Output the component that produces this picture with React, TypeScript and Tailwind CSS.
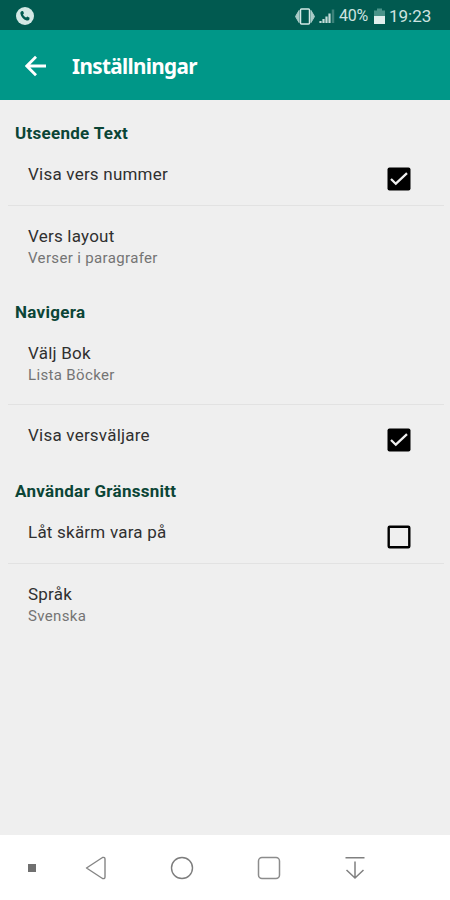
interface iSetting {
  title: string;
  summary?: string;
  checked?: boolean;
}

interface iGroup {
  name: string;
  settings: iSetting[];
}

const groups: iGroup[] = [
  {
    name: "Utseende Text",
    settings: [
      { title: "Visa vers nummer", checked: true },
      { title: "Vers layout", summary: "Verser i paragrafer" },
    ],
  },
  {
    name: "Navigera",
    settings: [
      { title: "Välj Bok", summary: "Lista Böcker" },
      { title: "Visa versväljare", checked: true },
    ],
  },
  {
    name: "Användar Gränssnitt",
    settings: [
      { title: "Låt skärm vara på", checked: false },
      { title: "Språk", summary: "Svenska" },
    ],
  },
];

const StatusBar = () => {
  return (
    <div className="flex h-[30px] items-center bg-[#015a50] pl-4 pr-[18px] pt-[2px] text-[#cfe3e0]">
      <svg width="18" height="18" viewBox="0 0 18 18">
        <circle cx="9" cy="9" r="9" fill="#d3e8e5" />
        <path
          d="M5.4 4.2 7 3.9l1 2.4-1 1.1c.7 1.4 1.7 2.5 3.1 3.2l1.2-1 2.3 1.1-.3 1.7c-.4 1-1.5 1.3-2.7 1C7.3 12.6 4.9 9.7 4.4 6.5c-.1-1 .2-1.8 1-2.3Z"
          fill="#015a50"
        />
      </svg>
      <svg className="ml-auto" width="20" height="17" viewBox="0 0 20 17">
        <path d="M4 2.5v12L.5 8.5ZM16 2.5v12l3.5-6Z" fill="#a9cbc7" stroke="#a9cbc7" strokeLinejoin="round" />
        <rect x="5.5" y="1" width="9" height="15" rx="1" fill="#015a50" stroke="#d3e8e5" strokeWidth="1.5" />
      </svg>
      <svg className="ml-1" width="17" height="16" viewBox="0 0 17 16">
        <path d="M1.5 13v2M4.5 11v4M7.5 8.5V15M10.5 5.5V15" stroke="#c4dcd9" strokeWidth="2.2" />
        <path d="M14 1.5V15" stroke="#3d827a" strokeWidth="2.5" />
      </svg>
      <span className="ml-[3px] w-[30px] whitespace-nowrap text-[16px] leading-5 tracking-[-0.2px]">40%</span>
      <svg className="ml-[5px]" width="11" height="16" viewBox="0 0 11 16">
        <path d="M0 2.5h3V.5h5v2h3V8H0Z" fill="#4a9389" />
        <path d="M0 8h11v8H0Z" fill="#e0efed" />
      </svg>
      <span className="ml-1 w-[43px] whitespace-nowrap text-[17px] leading-5">19:23</span>
    </div>
  );
};

const CheckBox = ({ checked }: { checked: boolean }) => {
  return (
    <svg className="mt-[23px] shrink-0" width="24" height="24" viewBox="0 0 24 24">
      {checked ? (
        <>
          <rect x="0.5" y="0.5" width="23" height="23" rx="2" fill="#000" />
          <path d="m4 12 4.8 4.7L20 6.2" fill="none" stroke="#efefef" strokeWidth="2.3" />
        </>
      ) : (
        <rect x="1.7" y="1.7" width="20.6" height="20.6" rx="1" fill="none" stroke="#000" strokeWidth="2.4" />
      )}
    </svg>
  );
};

const SettingRow = ({ setting }: { setting: iSetting }) => {
  return (
    <div className={`flex justify-between pl-5 pr-[33px] ${setting.summary ? "h-[82px]" : "h-[62px]"}`}>
      <div className="flex flex-col pt-[19px]">
        <p className="text-[17px] leading-[22px] tracking-[0.22px] text-[#303030]">{setting.title}</p>
        {setting.summary && (
          <p className="text-[15px] leading-[23px] tracking-[0.35px] text-[#747474]">{setting.summary}</p>
        )}
      </div>
      {setting.checked !== undefined && <CheckBox checked={setting.checked} />}
    </div>
  );
};

const NavigationBar = () => {
  return (
    <div className="flex h-[65px] items-center bg-white pl-[28px]">
      <svg width="8" height="8" viewBox="0 0 8 8">
        <rect width="8" height="8" fill="#707070" />
      </svg>
      <svg className="ml-[48px]" width="24" height="24" viewBox="0 0 24 24" fill="none" stroke="#858585" strokeWidth="1.4" strokeLinejoin="round">
        <path d="M2.5 12 18.5 1.5Q21 .8 21 3v18q0 2.2-2.5 1.5Z" />
      </svg>
      <svg className="ml-[62px]" width="24" height="24" viewBox="0 0 24 24" fill="none" stroke="#7d7d7d" strokeWidth="1.4">
        <circle cx="12" cy="12" r="10.5" />
      </svg>
      <svg className="ml-[63px]" width="24" height="24" viewBox="0 0 24 24" fill="none" stroke="#8c8c8c" strokeWidth="1.5">
        <rect x="1.5" y="1.5" width="21" height="21" rx="3.5" />
      </svg>
      <svg className="ml-[62px]" width="24" height="24" viewBox="0 0 24 24" fill="none" stroke="#808080" strokeWidth="1.5">
        <path d="M2.5 1.8h19M12 5.5V22M3.5 14l8.500 8 8.500-8" />
      </svg>
    </div>
  );
};

const App = () => {
  return (
    <div className="flex h-[900px] w-[450px] flex-col overflow-hidden bg-[#efefef] font-['Roboto',sans-serif]">
      <StatusBar />
      <header className="flex h-[70px] items-center bg-[#009788] pl-[25px] pt-px">
        <svg width="22" height="22" viewBox="0 0 22 22" fill="none" stroke="#fff" strokeWidth="2.8">
          <path d="M21 11H2.5M11 1.8 1.8 11l9.2 9.2" />
        </svg>
        <h1 className="mb-0.5 ml-[25px] origin-left scale-x-[0.94] whitespace-nowrap font-['Noto_Sans',sans-serif] text-[22px] font-bold leading-7 tracking-[-0.7px] text-white">
          Inställningar
        </h1>
      </header>
      <main className="flex flex-1 flex-col gap-[15px] pt-6">
        {groups.map((group) => (
          <section key={group.name}>
            <h2 className="pl-[15px] text-[17px] font-bold leading-[19px] tracking-[0.28px] text-[#0b4536]">
              {group.name}
            </h2>
            <div className="ml-2 mr-1.5 divide-y divide-[#e2e2e2] pt-px">
              {group.settings.map((setting) => (
                <SettingRow key={setting.title} setting={setting} />
              ))}
            </div>
          </section>
        ))}
      </main>
      <NavigationBar />
    </div>
  );
};

export default App;
